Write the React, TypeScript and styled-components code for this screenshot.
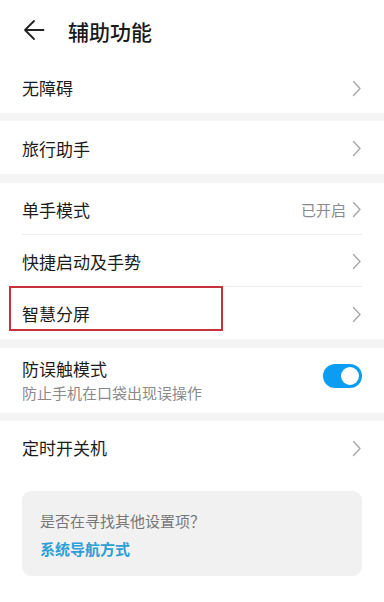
import styled, { createGlobalStyle } from 'styled-components';

const GlobalStyle = createGlobalStyle`
    * {
        box-sizing: border-box;
    }
    body {
        margin: 0;
        background: #ffffff;
        font-family: 'Noto Sans CJK SC', 'Noto Sans', sans-serif;
        color: #1c1c1c;
    }
`;

const Page = styled.div`
    width: 384px;
    min-height: 602px;
    background: #ffffff;
    display: flex;
    flex-direction: column;
`;

const Header = styled.header`
    height: 61px;
    display: flex;
    align-items: center;
    padding: 0 0 0 22px;
    gap: 22px;
`;

const BackButton = styled.button`
    border: none;
    background: none;
    padding: 0;
    width: 24px;
    height: 24px;
    display: flex;
    align-items: center;
    justify-content: center;
    color: #222;
    margin-top: -1px;
`;

const Title = styled.h1`
    margin: 0;
    font-size: 21px;
    font-weight: 500;
    color: #1a1a1a;
    line-height: 1;
    margin-top: 2px;
`;

const Section = styled.section<{ $gap?: number }>`
    background: #ffffff;
    border-bottom: ${(p) => p.$gap ?? 8}px solid #f4f4f4;
`;

const Row = styled.div<{ $height?: number; $last?: boolean }>`
    position: relative;
    height: ${(p) => p.$height ?? 52}px;
    margin: 0 22px;
    display: flex;
    align-items: center;
    justify-content: space-between;
    border-bottom: ${(p) => (p.$last ? 'none' : '1px solid #ececec')};
    padding-top: ${(p) => ((p.$height ?? 52) > 60 ? 0 : 2)}px;
`;

const Texts = styled.div`
    display: flex;
    flex-direction: column;
    gap: 3px;
`;

const Label = styled.span`
    font-size: 17px;
    line-height: 22px;
    color: #1c1c1c;
`;

const Sub = styled.span`
    font-size: 15px;
    line-height: 20px;
    color: #8a8a8a;
`;

const Right = styled.div`
    display: flex;
    align-items: center;
    gap: 6px;
    color: #8a8a8a;
    font-size: 15px;
`;

const Chevron = () => (
    <svg width="10" height="17" viewBox="0 0 10 17" fill="none">
        <path d="M1.5 1.5 L8 8.5 L1.5 15.5" stroke="#a8a8a8" strokeWidth="1.4" strokeLinecap="round" strokeLinejoin="round" />
    </svg>
);

const Switch = styled.div<{ $on: boolean }>`
    width: 39px;
    height: 24px;
    border-radius: 12px;
    background: ${(p) => (p.$on ? '#0a9df2' : '#cfcfcf')};
    display: flex;
    align-items: center;
    justify-content: ${(p) => (p.$on ? 'flex-end' : 'flex-start')};
    padding: 0 3px;
    margin-top: -10px;
    &::after {
        content: '';
        width: 18px;
        height: 18px;
        border-radius: 50%;
        background: #ffffff;
    }
`;

const Highlight = styled.div`
    position: absolute;
    left: -13px;
    top: -1px;
    width: 214px;
    height: 45px;
    border: 2px solid #c8323c;
    pointer-events: none;
`;

const LastSection = styled.section`
    flex: 1;
    display: flex;
    flex-direction: column;
`;

const Card = styled.div`
    margin: 18px 22px 0;
    background: #f1f1f1;
    border-radius: 9px;
    padding: 19px 18px 17px;
    display: flex;
    flex-direction: column;
    gap: 7px;
`;

const CardText = styled.p`
    margin: 0;
    font-size: 15px;
    line-height: 21px;
    color: #777777;
`;

const CardLink = styled.a`
    font-size: 15px;
    line-height: 21px;
    font-weight: 700;
    color: #2b9fd6;
    text-decoration: none;
`;

type Item = {
    label: string;
    value?: string;
    highlight?: boolean;
};

type Group = {
    items: Item[];
    height?: number;
    gap?: number;
};

const groups: Group[] = [
    { items: [{ label: '无障碍' }] },
    { items: [{ label: '旅行助手' }], height: 53, gap: 9 },
    {
        items: [{ label: '单手模式', value: '已开启' }, { label: '快捷启动及手势' }, { label: '智慧分屏', highlight: true }],
        gap: 9,
    },
];

export default function App() {
    return (
        <>
            <GlobalStyle />
            <Page>
                <Header>
                    <BackButton>
                        <svg width="22" height="22" viewBox="0 0 22 22" fill="none">
                            <path d="M20.5 11 H2 M11 2 L2 11 L11 20" stroke="#222" strokeWidth="1.8" strokeLinecap="round" strokeLinejoin="round" />
                        </svg>
                    </BackButton>
                    <Title>辅助功能</Title>
                </Header>
                {groups.map((group, gi) => (
                    <Section key={gi} $gap={group.gap}>
                        {group.items.map((item, i) => (
                            <Row key={item.label} $height={group.height} $last={i === group.items.length - 1}>
                                <Label>{item.label}</Label>
                                <Right>
                                    {item.value}
                                    <Chevron />
                                </Right>
                                {item.highlight && <Highlight />}
                            </Row>
                        ))}
                    </Section>
                ))}
                <Section>
                    <Row $height={65} $last>
                        <Texts>
                            <Label>防误触模式</Label>
                            <Sub>防止手机在口袋出现误操作</Sub>
                        </Texts>
                        <Switch $on />
                    </Row>
                </Section>
                <LastSection>
                    <Row $last>
                        <Label>定时开关机</Label>
                        <Right>
                            <Chevron />
                        </Right>
                    </Row>
                    <Card>
                        <CardText>是否在寻找其他设置项？</CardText>
                        <CardLink href="#">系统导航方式</CardLink>
                    </Card>
                </LastSection>
            </Page>
        </>
    );
}
